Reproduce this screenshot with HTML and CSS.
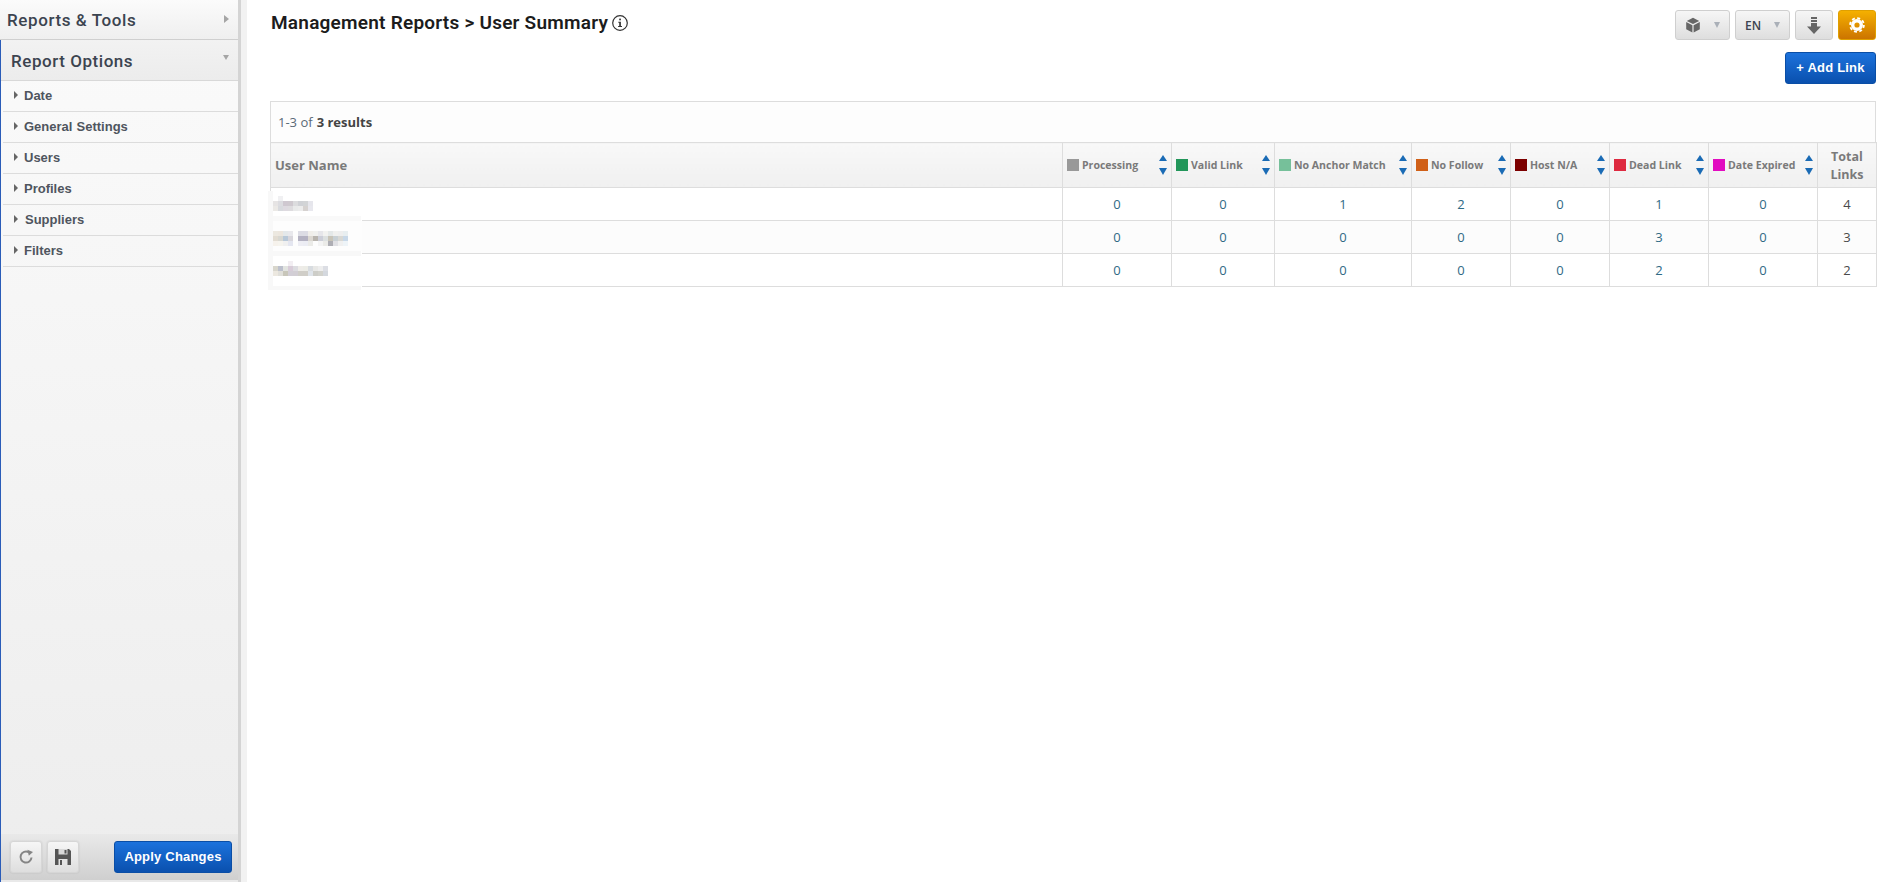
FILE: index.html
```html
<!DOCTYPE html>
<html lang="en">
<head>
<meta charset="utf-8">
<title>Management Reports &gt; User Summary</title>
<link rel="stylesheet" href="styles.css">
</head>
<body>
<div class="app">
  <aside class="sidebar">
    <div class="panel-head">
      <span>Reports &amp; Tools</span>
      <i class="tri tri-right-big"></i>
    </div>
    <div class="options">
      <div class="options-head">
        <span>Report Options</span>
        <i class="tri tri-down-big"></i>
      </div>
      <ul class="menu">
        <li><i class="tri tri-item"></i>Date</li>
        <li><i class="tri tri-item"></i><span class="wide">General Settings</span></li>
        <li><i class="tri tri-item"></i>Users</li>
        <li><i class="tri tri-item"></i>Profiles</li>
        <li><i class="tri tri-item"></i><span class="nudge">Suppliers</span></li>
        <li><i class="tri tri-item"></i>Filters</li>
      </ul>
      <div class="side-foot">
        <button class="btn icon-btn" type="button" aria-label="Reset">
          <svg width="16" height="16" viewBox="0 0 16 16"><path d="M13.500 8.500A5.500 5.500 0 1 1 10.600 3.200" fill="none" stroke="#858585" stroke-width="2"/><path d="M9.400 .8 15 3 10.800 6.800Z" fill="#858585"/></svg>
        </button>
        <button class="btn icon-btn" type="button" aria-label="Save">
          <svg width="16" height="16" viewBox="0 0 16 16"><path d="M0 0H14L16 2V16H0Z" fill="#555"/><rect x="3.500" y="0" width="9" height="5.500" fill="#d8d8d8"/><rect x="9.500" y="1" width="2" height="3.500" fill="#555"/><rect x="3.500" y="10" width="9" height="6" fill="#e4e4e4"/><rect x="5" y="11" width="2" height="5" fill="#555"/></svg>
        </button>
        <button class="btn primary apply" type="button">Apply Changes</button>
      </div>
    </div>
  </aside>
  <div class="splitter"></div>
  <main class="content">
    <header class="top">
      <h1 class="title">Management Reports &gt; User Summary
        <svg class="info" width="16" height="16" viewBox="0 0 16 16"><circle cx="8" cy="8" r="7.300" fill="none" stroke="#333" stroke-width="1.200"/><rect x="7.200" y="3.600" width="1.700" height="1.700" fill="#333"/><path d="M6.300 6.700H8.900V11H10V12H6.100V11H7.200V7.700H6.300Z" fill="#333"/></svg>
      </h1>
      <div class="actions">
        <div class="tools">
          <button class="btn tool w55" type="button" aria-label="Product">
            <svg width="16" height="16" viewBox="0 0 16 16" fill="#666"><path d="M8 .8 14.200 3.900 8 7 1.800 3.900Z"/><path d="M1.200 5.100 7.400 8.200V15.400L1.200 12.200Z"/><path d="M14.800 5.100 8.600 8.200V15.400L14.800 12.200Z"/></svg>
            <i class="tri tri-tool"></i>
          </button>
          <button class="btn tool w55 en" type="button"><span>EN</span><i class="tri tri-tool"></i></button>
          <button class="btn tool w38" type="button" aria-label="Download">
            <svg width="14" height="17" viewBox="0 0 14 17" fill="#666"><rect x="4" y="0" width="6" height="2"/><rect x="4" y="3" width="6" height="2"/><path d="M4 6H10V9.500H14L7 17 0 9.500H4Z"/></svg>
          </button>
          <button class="btn tool w38 orange" type="button" aria-label="Settings">
            <svg width="16" height="16" viewBox="0 0 16 16" fill="none" stroke="#fff"><circle cx="8" cy="8" r="4.300" stroke-width="3.400"/><circle cx="8" cy="8" r="6.900" stroke-width="1.800" stroke-dasharray="3 2.420"/></svg>
          </button>
        </div>
        <button class="btn primary add" type="button">+ Add Link</button>
      </div>
    </header>

    <section class="report">
      <div class="count">1-3 of <b>3 results</b></div>
      <table class="grid">
        <colgroup>
          <col class="c-name"><col class="c-109"><col class="c-103"><col class="c-137"><col class="c-99"><col class="c-99"><col class="c-99"><col class="c-109"><col class="c-59">
        </colgroup>
        <thead>
          <tr>
            <th class="th-name">User Name</th>
            <th><div class="hd"><i class="sw s-proc"></i><span>Processing</span><i class="sort"></i></div></th>
            <th><div class="hd"><i class="sw s-valid"></i><span>Valid Link</span><i class="sort"></i></div></th>
            <th><div class="hd"><i class="sw s-anchor"></i><span>No Anchor Match</span><i class="sort"></i></div></th>
            <th><div class="hd"><i class="sw s-follow"></i><span>No Follow</span><i class="sort"></i></div></th>
            <th><div class="hd"><i class="sw s-host"></i><span>Host N/A</span><i class="sort"></i></div></th>
            <th><div class="hd"><i class="sw s-dead"></i><span>Dead Link</span><i class="sort"></i></div></th>
            <th><div class="hd"><i class="sw s-date"></i><span>Date Expired</span><i class="sort"></i></div></th>
            <th class="th-total">Total Links</th>
          </tr>
        </thead>
        <tbody>
          <tr><td></td><td>0</td><td>0</td><td>1</td><td>2</td><td>0</td><td>1</td><td>0</td><td class="total">4</td></tr>
          <tr><td></td><td>0</td><td>0</td><td>0</td><td>0</td><td>0</td><td>3</td><td>0</td><td class="total">3</td></tr>
          <tr><td></td><td>0</td><td>0</td><td>0</td><td>0</td><td>0</td><td>2</td><td>0</td><td class="total">2</td></tr>
        </tbody>
      </table>
      <svg class="mosaic" width="94" height="100" viewBox="268 191 94 100" aria-hidden="true">
        <rect x="268" y="191" width="94" height="100" fill="#fff"/>
        <rect x="273" y="221" width="89" height="30" fill="#fdfdfd"/>
        <rect x="268" y="191" width="5" height="99" fill="#f8f8f8"/>
        <rect x="273" y="216" width="88" height="5" fill="#f9f9f9"/>
        <rect x="273" y="251" width="88" height="5" fill="#f8f8f8"/>
        <rect x="273" y="286" width="88" height="4" fill="#f8f8f8"/>
        <g>
          <rect x="278" y="196" width="5" height="5" fill="#f0f0f2"/>
          <rect x="273" y="201" width="5" height="5" fill="#e6e4e4"/><rect x="278" y="201" width="5" height="5" fill="#dcdce0"/><rect x="283" y="201" width="5" height="5" fill="#cfc8d0"/><rect x="288" y="201" width="5" height="5" fill="#cfc9cf"/><rect x="293" y="201" width="5" height="5" fill="#dcdcde"/><rect x="298" y="201" width="5" height="5" fill="#d0d2d6"/><rect x="303" y="201" width="5" height="5" fill="#d2d4d6"/><rect x="308" y="201" width="5" height="5" fill="#e6e6ec"/>
          <rect x="273" y="206" width="5" height="5" fill="#ebe9e6"/><rect x="278" y="206" width="5" height="5" fill="#d8dade"/><rect x="283" y="206" width="5" height="5" fill="#dedae0"/><rect x="288" y="206" width="5" height="5" fill="#dedcdf"/><rect x="293" y="206" width="5" height="5" fill="#e9eaea"/><rect x="298" y="206" width="5" height="5" fill="#ececec"/><rect x="303" y="206" width="5" height="5" fill="#d6d2d0"/><rect x="308" y="206" width="5" height="5" fill="#e8e8ee"/>
        </g>
        <g>
          <rect x="273" y="231" width="5" height="5" fill="#ece8e0"/><rect x="278" y="231" width="5" height="5" fill="#ece6de"/><rect x="283" y="231" width="5" height="5" fill="#e4e8ea"/><rect x="288" y="231" width="5" height="5" fill="#e8e8ec"/><rect x="298" y="231" width="5" height="5" fill="#dcdce4"/><rect x="303" y="231" width="5" height="5" fill="#dcdce4"/><rect x="308" y="231" width="5" height="5" fill="#f0eeea"/><rect x="313" y="231" width="5" height="5" fill="#f0f0ee"/><rect x="318" y="231" width="5" height="5" fill="#e6e6ea"/><rect x="323" y="231" width="5" height="5" fill="#f2f2f0"/><rect x="328" y="231" width="5" height="5" fill="#e4e8e8"/><rect x="333" y="231" width="5" height="5" fill="#f0f0ee"/><rect x="338" y="231" width="5" height="5" fill="#eeeeee"/><rect x="343" y="231" width="5" height="5" fill="#e8eef0"/>
          <rect x="273" y="236" width="5" height="5" fill="#e2dcd2"/><rect x="278" y="236" width="5" height="5" fill="#d8d8d2"/><rect x="283" y="236" width="5" height="5" fill="#b8c8d8"/><rect x="288" y="236" width="5" height="5" fill="#d8d6dc"/><rect x="298" y="236" width="5" height="5" fill="#b4b2c2"/><rect x="303" y="236" width="5" height="5" fill="#b4b2c2"/><rect x="308" y="236" width="5" height="5" fill="#dcd8d2"/><rect x="313" y="236" width="5" height="5" fill="#b8b4ae"/><rect x="318" y="236" width="5" height="5" fill="#ccced8"/><rect x="323" y="236" width="5" height="5" fill="#dce0e0"/><rect x="328" y="236" width="5" height="5" fill="#c8c4b8"/><rect x="333" y="236" width="5" height="5" fill="#c8d0d4"/><rect x="338" y="236" width="5" height="5" fill="#d8d8d4"/><rect x="343" y="236" width="5" height="5" fill="#c8d8e8"/>
          <rect x="273" y="241" width="5" height="5" fill="#f6f2ec"/><rect x="278" y="241" width="5" height="5" fill="#f6f4ee"/><rect x="283" y="241" width="5" height="5" fill="#f0f0f0"/><rect x="288" y="241" width="5" height="5" fill="#e4e6f0"/><rect x="298" y="241" width="5" height="5" fill="#eeeef4"/><rect x="303" y="241" width="5" height="5" fill="#ecedf4"/><rect x="308" y="241" width="5" height="5" fill="#ebebe8"/><rect x="318" y="241" width="5" height="5" fill="#f4f4f4"/><rect x="323" y="241" width="5" height="5" fill="#ebebe8"/><rect x="328" y="241" width="5" height="5" fill="#aeaeb4"/><rect x="333" y="241" width="5" height="5" fill="#e0e0e4"/><rect x="338" y="241" width="5" height="5" fill="#f0f0f0"/><rect x="343" y="241" width="5" height="5" fill="#eef4f8"/>
        </g>
        <g>
          <rect x="288" y="261" width="5" height="5" fill="#f2eef2"/>
          <rect x="273" y="266" width="5" height="5" fill="#d8d6cc"/><rect x="278" y="266" width="5" height="5" fill="#bcc0cc"/><rect x="283" y="266" width="5" height="5" fill="#e2e4e0"/><rect x="288" y="266" width="5" height="5" fill="#d8ccd8"/><rect x="293" y="266" width="5" height="5" fill="#dcdce0"/><rect x="298" y="266" width="5" height="5" fill="#eeece8"/><rect x="303" y="266" width="5" height="5" fill="#ecece6"/><rect x="308" y="266" width="5" height="5" fill="#d8dce0"/><rect x="313" y="266" width="5" height="5" fill="#e8e8e6"/><rect x="318" y="266" width="5" height="5" fill="#eeeeee"/><rect x="323" y="266" width="5" height="5" fill="#dcdee4"/>
          <rect x="273" y="271" width="5" height="5" fill="#ece8e0"/><rect x="278" y="271" width="5" height="5" fill="#e0dfda"/><rect x="283" y="271" width="5" height="5" fill="#c8c6ba"/><rect x="288" y="271" width="5" height="5" fill="#d2ced6"/><rect x="293" y="271" width="5" height="5" fill="#d2ced4"/><rect x="298" y="271" width="5" height="5" fill="#d0cec8"/><rect x="303" y="271" width="5" height="5" fill="#d0cec8"/><rect x="308" y="271" width="5" height="5" fill="#dfe4ea"/><rect x="313" y="271" width="5" height="5" fill="#cdcdc8"/><rect x="318" y="271" width="5" height="5" fill="#d2d2cc"/><rect x="323" y="271" width="5" height="5" fill="#d4d8de"/>
        </g>
      </svg>
    </section>
  </main>
</div>
</body>
</html>
```
FILE: styles.css
```css
* { box-sizing: border-box; }
html, body { margin: 0; height: 100%; background: #fff; overflow: hidden; }
body { font-family: "Open Sans", sans-serif; color: #333; }
.app { display: flex; height: 882px; }

.sidebar {
  width: 241px;
  flex: none;
  display: flex;
  flex-direction: column;
  border-right: 3px solid #d4d4d4;
  background: #f8f8f8;
}
.splitter { width: 6px; flex: none; background: #f2f2f2; }

.panel-head {
  height: 40px;
  flex: none;
  display: flex;
  align-items: center;
  justify-content: space-between;
  padding: 1px 9px 0 7px;
  border-bottom: 1px solid #cfcfcf;
  background: linear-gradient(#fbfbfb, #efefef);
  font: 500 17px Roboto, sans-serif;
  letter-spacing: .6px;
  color: #3c4450;
}
.options {
  flex: 1;
  display: flex;
  flex-direction: column;
  border-left: 1px solid #2a5cb8;
  background: linear-gradient(#fafafa, #ededed);
}
.options-head {
  height: 41px;
  flex: none;
  display: flex;
  align-items: center;
  justify-content: space-between;
  padding: 1px 9px 0 10px;
  border-bottom: 1px solid #d8d8d8;
  background: linear-gradient(#f2f2f2, #ececec);
  font: 500 17px Roboto, sans-serif;
  letter-spacing: .55px;
  color: #3c4450;
}
.menu { list-style: none; margin: 0; padding: 0 0 0 2px; }
.menu li {
  height: 31px;
  display: flex;
  align-items: center;
  padding: 0 0 2px 11px;
  border-bottom: 1px solid #dcdcdc;
  font: bold 13px "Liberation Sans", Arial, sans-serif;
  color: #4f555e;
}
.wide { word-spacing: .5px; }
.nudge { margin-left: 1px; }

.tri { display: block; width: 0; height: 0; flex: none; border-style: solid; border-color: transparent; }
.tri-right-big { border-width: 4px 0 4px 5px; border-left-color: #a5a5a5; margin-top: -2px; }
.tri-down-big { border-width: 5px 3.500px 0; border-top-color: #a5a5a5; margin-top: -6px; }
.tri-item { border-width: 4px 0 4px 4px; border-left-color: #666; margin-right: 6px; }
.tri-tool { border-width: 6px 3.500px 0; border-top-color: #aab0b8; }

.side-foot {
  margin-top: auto;
  height: 48px;
  flex: none;
  display: flex;
  align-items: flex-start;
  gap: 5px;
  padding: 7px 6px 0 9px;
  border-bottom: 2px solid #e9e9e9;
  background: linear-gradient(#e9e9e9, #cfcfcf);
}
.btn {
  display: flex;
  align-items: center;
  justify-content: center;
  padding: 0;
  border: 1px solid #cfcfcf;
  border-radius: 3px;
  background: linear-gradient(#f6f6f6, #dedede);
  cursor: pointer;
}
.icon-btn { width: 32px; height: 32px; border-color: #d6d6d6; box-shadow: 0 0 2px rgba(0,0,0,.12); }
.primary {
  border-color: #0a4ea6;
  background: linear-gradient(#1c72dc, #0a50ae);
  color: #fff;
  font: bold 13px "Liberation Sans", Arial, sans-serif;
  letter-spacing: .2px;
  padding-bottom: 2px;
}
.apply { width: 118px; height: 32px; margin-left: auto; }

.content { flex: 1; min-width: 0; padding: 0 15px 0 23px; }
.top { display: flex; justify-content: space-between; height: 101px; }
.title {
  display: flex;
  align-items: center;
  gap: 4px;
  height: 20px;
  margin: 12px 0 0 1px;
  font: 600 19px Roboto, sans-serif;
  letter-spacing: .23px;
  color: #1c1c1c;
  white-space: nowrap;
}
.info { flex: none; margin-top: 1px; }
.actions { display: flex; flex-direction: column; align-items: flex-end; gap: 12px; padding-top: 10px; }
.tools { display: flex; gap: 5px; }
.tool { height: 30px; gap: 13px; }
.w55 { width: 55px; }
.w38 { width: 38px; }
.en { font: 600 12px "Open Sans", sans-serif; color: #3c4450; }
.orange { border-color: #e0a000; background: linear-gradient(#f5b000, #cc7400); }
.add { width: 91px; height: 32px; }

.report { position: relative; width: 1606px; }
.count {
  height: 41px;
  display: flex;
  align-items: center;
  gap: 4px;
  padding: 0 7px;
  border: 1px solid #ddd;
  border-bottom: 0;
  background: #fdfdfd;
  font-size: 13px;
  color: #5a6a78;
}
.count b { color: #444; }
.grid { width: 1606px; table-layout: fixed; border-collapse: collapse; font-size: 13px; }
.c-name { width: 792px; }
.c-109 { width: 109px; }
.c-103 { width: 103px; }
.c-137 { width: 137px; }
.c-99 { width: 99px; }
.c-59 { width: 59px; }
.grid th, .grid td { border: 1px solid #ddd; padding: 0; }
.grid th {
  height: 45px;
  background: linear-gradient(#f8f8f8, #f0f0f0);
  color: #7a7a7a;
  font-weight: 700;
  text-align: left;
}
.th-name { padding-left: 4px !important; font-size: 13px; }
.th-total { text-align: center !important; font-size: 12.500px; line-height: 18px; padding-top: 1px !important; }
.hd { display: flex; align-items: center; padding: 0 3px 0 4px; font-size: 10.550px; white-space: nowrap; }
.hd span { margin-left: 3px; flex: 1; }
.sw { display: block; width: 12px; height: 12px; flex: none; }
.s-proc { background: #999; }
.s-valid { background: #22965a; }
.s-anchor { background: #76c09a; }
.s-follow { background: #d06018; }
.s-host { background: #7c0000; }
.s-dead { background: #de2a40; }
.s-date { background: #e20cc0; }
.sort { position: relative; display: block; width: 8px; height: 20px; flex: none; margin-right: 1px; }
.sort::before, .sort::after { content: ""; position: absolute; left: 0; width: 0; height: 0; border-style: solid; border-color: transparent; }
.sort::before { top: 0; border-width: 0 4px 6px; border-bottom-color: #1a6bb5; }
.sort::after { bottom: 0; border-width: 7px 4px 0; border-top-color: #1a6bb5; }
.grid td { height: 33px; text-align: center; color: #2f6a85; }
.grid tbody tr:nth-child(even) td { background: #fcfcfc; }
.grid td.total { color: #4a4a4a; }
.mosaic { position: absolute; left: -2px; top: 90px; display: block; }
```
